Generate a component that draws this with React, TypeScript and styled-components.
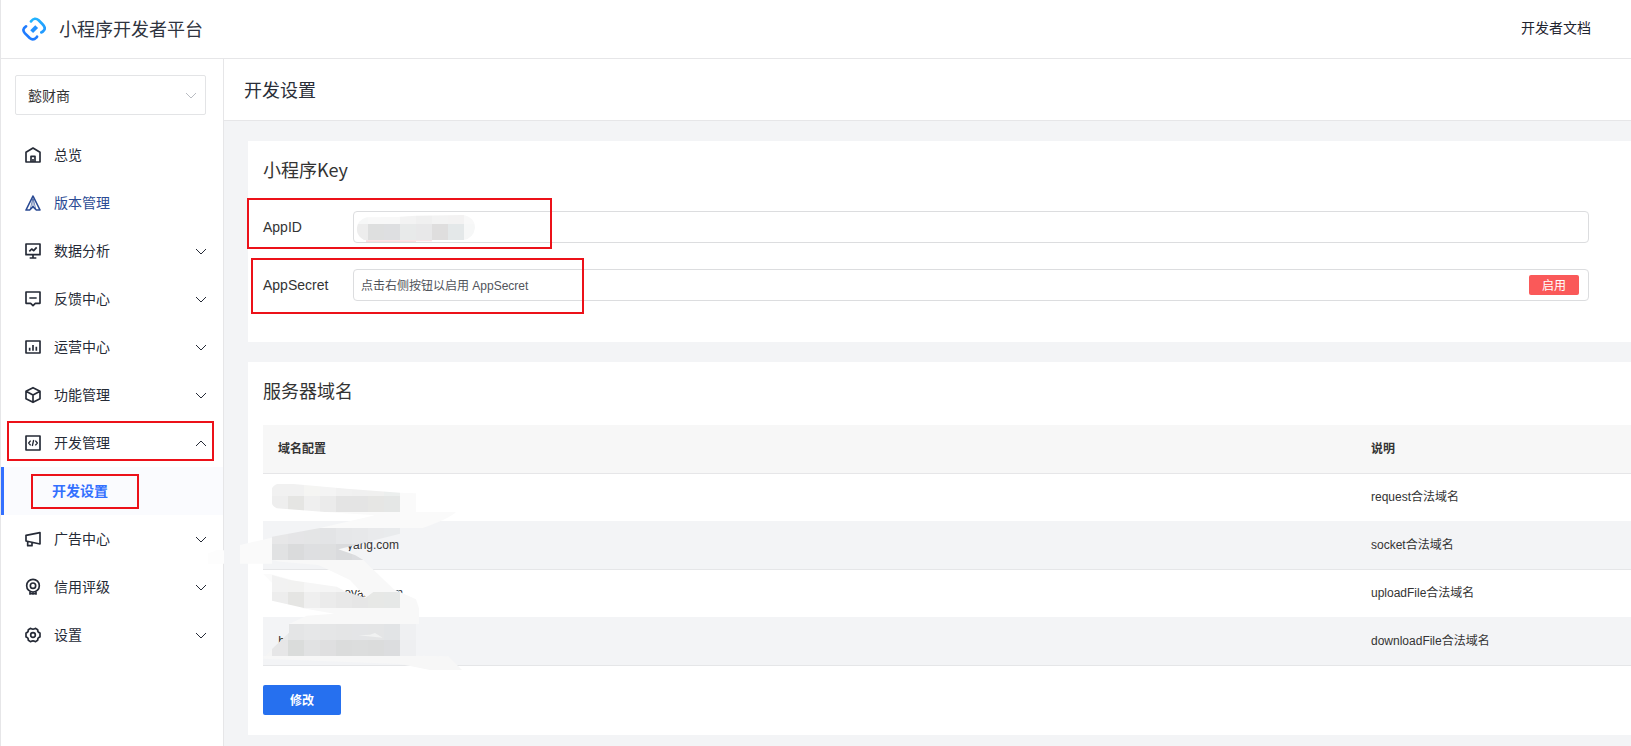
import React from "react";
import styled, { createGlobalStyle, css } from "styled-components";

const latin = `"Liberation Sans", "Noto Sans CJK SC", sans-serif`;
const cjk = `"Noto Sans CJK SC", sans-serif`;

const GlobalStyle = createGlobalStyle`
  *, *::before, *::after { box-sizing: border-box; }
  body {
    margin: 0;
    background: #f3f4f6;
    color: #333;
    font: 14px/20px ${latin};
  }
  button, input, select { font: inherit; color: inherit; }
`;

const Page = styled.div`
  min-height: 100vh;
  display: flex;
  flex-direction: column;
  border-left: 1px solid #e6e6e8;
  overflow-x: hidden;
`;

const Header = styled.header`
  height: 59px;
  flex: none;
  display: flex;
  align-items: center;
  justify-content: space-between;
  padding: 0 40px 0 21px;
  background: #fff;
  border-bottom: 1px solid #e6e6e8;
`;

const Brand = styled.div`
  display: flex;
  align-items: center;
  gap: 13px;
`;

const BrandName = styled.span`
  padding-bottom: 2px;
  font: 18px/28px ${cjk};
  color: #2f3440;
`;

const DocLink = styled.a`
  padding-bottom: 2px;
  color: #1f2430;
  text-decoration: none;
`;

const Body = styled.div`
  flex: 1;
  display: flex;
`;

const Sidebar = styled.aside`
  width: 223px;
  flex: none;
  padding-top: 16px;
  background: #fff;
  border-right: 1px solid #e6e6e8;
`;

const SelectBox = styled.div`
  position: relative;
  margin: 0 17px 16px 14px;
`;

const AppSelect = styled.select`
  display: block;
  width: 100%;
  height: 40px;
  padding: 2px 32px 0 12px;
  appearance: none;
  border: 1px solid #e3e4e6;
  border-radius: 2px;
  background: #fff;
`;

const SelectArrow = styled.span`
  position: absolute;
  right: 9px;
  top: 14px;
  display: flex;
  color: #b9bcc2;
  pointer-events: none;
`;

const NavList = styled.ul`
  margin: 0;
  padding: 0;
  list-style: none;
`;

const NavItem = styled.li`
  position: relative;
`;

const navRow = css`
  width: 100%;
  height: 48px;
  display: flex;
  align-items: center;
  padding: 0 16px 0 24px;
  border: 0;
  background: none;
  text-align: left;
  text-decoration: none;
`;

const NavButton = styled.button`
  ${navRow}
  color: #252a36;
`;

const NavLink = styled.a<{ $accent?: boolean }>`
  ${navRow}
  color: ${(p) => (p.$accent ? "#2b4b94" : "#252a36")};
`;

const SubLink = styled.a`
  ${navRow}
  padding-left: 48px;
  border-left: 3px solid #3370ff;
  background: #fafbfe;
  color: #3370ff;
  font-weight: 700;
`;

const NavLabel = styled.span`
  flex: 1;
  padding-left: 13px;
`;

const Highlight = styled.span<{ $x: number; $y: number; $w: number; $h: number }>`
  position: absolute;
  left: ${(p) => p.$x}px;
  top: ${(p) => p.$y}px;
  width: ${(p) => p.$w}px;
  height: ${(p) => p.$h}px;
  border: 2px solid #ec1119;
  pointer-events: none;
`;

const Main = styled.main`
  flex: 1;
  min-width: 0;
`;

const PageTitle = styled.h1`
  height: 62px;
  margin: 0;
  padding: 16px 20px;
  background: #fff;
  border-bottom: 1px solid #e6e6e8;
  font: 18px/28px ${cjk};
  color: #2a2e38;
`;

const Cards = styled.div`
  display: flex;
  flex-direction: column;
  gap: 20px;
  padding: 20px 0 11px 24px;
`;

const Card = styled.section`
  padding: 14px 0 20px 15px;
  background: #fff;
`;

const CardTitle = styled.h2`
  margin: 0 0 21px;
  font: 18px/28px ${cjk};
  color: #333;
`;

const Fields = styled.div`
  display: flex;
  flex-direction: column;
  gap: 26px;
  padding: 7px 42px 21px 0;
`;

const Field = styled.div`
  position: relative;
  display: flex;
  align-items: center;
`;

const FieldLabel = styled.label`
  width: 90px;
  flex: none;
`;

const InputFrame = styled.div`
  flex: 1;
  height: 32px;
  display: flex;
  align-items: center;
  padding: 0 9px 0 7px;
  border: 1px solid #dcdddf;
  border-radius: 4px;
`;

const FieldInput = styled.input`
  flex: 1;
  min-width: 0;
  height: 30px;
  padding: 0 0 2px;
  border: 0;
  outline: 0;
  background: none;
  font-size: 12px;
  color: #51545b;
`;

const EnableButton = styled.button`
  width: 50px;
  height: 20px;
  padding: 2px 0 0;
  border: 0;
  border-radius: 2px;
  background: #fa5959;
  color: #fff;
  font-size: 12px;
  line-height: 18px;
`;

const TableWrap = styled.div`
  position: relative;
`;

const Table = styled.table`
  width: 100%;
  table-layout: fixed;
  border-collapse: separate;
  border-spacing: 0;
  font-size: 12px;
`;

const Th = styled.th<{ $w?: number }>`
  width: ${(p) => (p.$w ? `${p.$w}px` : "auto")};
  height: 49px;
  padding: 0 15px;
  background: #f7f7f7;
  border-bottom: 1px solid #e6e6e8;
  text-align: left;
`;

const Td = styled.td<{ $shaded: boolean }>`
  height: 48px;
  padding: 0 15px 2px;
  background: ${(p) => (p.$shaded ? "#f3f4f6" : "#fff")};
  border-bottom: 1px solid ${(p) => (p.$shaded ? "#e5e6e8" : "#f3f4f6")};
`;

const Domain = styled.span<{ $w: number }>`
  display: block;
  width: ${(p) => p.$w}px;
  text-align: right;
`;

const Cover = styled.svg<{ $x: number; $y: number }>`
  position: absolute;
  left: ${(p) => p.$x}px;
  top: ${(p) => p.$y}px;
  pointer-events: none;
`;

const ModifyButton = styled.button`
  display: block;
  width: 78px;
  height: 30px;
  margin-top: 19px;
  padding: 2px 0 0;
  border: 0;
  border-radius: 2px;
  background: #2670ef;
  color: #fff;
  font-size: 12px;
  font-weight: 700;
`;

const Logo = () => (
  <svg width="24" height="24" viewBox="0 0 72 72" fill="none" strokeWidth="8" strokeLinecap="round" aria-hidden="true">
    <defs>
      <linearGradient id="logoTop" x1="24" y1="4" x2="64" y2="50" gradientUnits="userSpaceOnUse">
        <stop stopColor="#22b8ff" />
        <stop offset="1" stopColor="#2298ff" />
      </linearGradient>
    </defs>
    <path d="M27 13Q38 -1 50 10L61 21Q73 33 65 41Q62 45 58 46" stroke="url(#logoTop)" />
    <path d="M12 28Q-2 37 9 49L23 63Q33 72 43 62L45 59" stroke="#1f7cff" />
    <path d="M29 44L44 29" stroke="#2191ff" strokeWidth="12" strokeLinecap="butt" />
  </svg>
);

const Chevron = ({ up }: { up?: boolean }) => (
  <svg width="12" height="12" viewBox="0 0 12 12" fill="none" stroke="currentColor" aria-hidden="true">
    <path d={up ? "M1 9L6 4L11 9" : "M1 4L6 9L11 4"} />
  </svg>
);

const icons: Record<string, React.ReactNode> = {
  home: (
    <>
      <path d="M3 45V16L24 3L45 16V45Z" />
      <path d="M18 45V28H30V45M24 36V45" />
    </>
  ),
  version: (
    <>
      <path d="M24 3L3 45H14L24 35L34 45H45Z" />
      <path d="M24 6V35M23 12L16 42M25 12L32 42" strokeWidth="2" />
    </>
  ),
  data: (
    <>
      <path d="M3 3H45V35H3Z" />
      <path d="M24 35V45M14 45H34M13 25L20 18L26 23L35 13" />
    </>
  ),
  feedback: <path d="M3 3H45V37H31L24 44L17 37H3ZM13 21H35" />,
  operate: (
    <>
      <path d="M3 6H45V42H3Z" />
      <path d="M14 26V35M24 18V35M34 23V35" />
    </>
  ),
  cube: <path d="M24 2L45 13V35L24 46L3 35V13ZM3 13L24 24L45 13M24 24V46" />,
  code: (
    <>
      <path d="M3 3H45V45H3Z" />
      <path d="M17 17L11 24L17 31M31 17L37 24L31 31M26 15L22 33" strokeWidth="4" />
    </>
  ),
  horn: <path d="M3 13L45 5V39L3 30ZM8 31V44H21V34" />,
  medal: (
    <>
      <circle cx="24" cy="20" r="19" />
      <circle cx="24" cy="20" r="8" />
      <path d="M15 38V47M33 38V47M15 44H33M24 40V47" />
    </>
  ),
  gear: (
    <>
      <path d="M17 4Q24 9 31 4L38 8Q37 16 45 18V30Q37 32 38 40L31 44Q24 39 17 44L10 40Q11 32 3 30V18Q11 16 10 8Z" />
      <circle cx="24" cy="24" r="7" />
    </>
  ),
};

const Icon = ({ name }: { name: string }) => (
  <svg width="16" height="16" viewBox="0 0 48 48" fill="none" stroke="currentColor" strokeWidth="5" strokeLinejoin="round" overflow="visible" aria-hidden="true">
    {icons[name]}
  </svg>
);

/* A row of equally wide mosaic tiles. */
const Tiles = ({ x, y, h, colors }: { x: number; y: number; h: number; colors: string[] }) => (
  <g shapeRendering="crispEdges">
    {colors.map((c, i) => (
      <rect key={i} x={x + i * 48} y={y} width="48" height={h} fill={c} />
    ))}
  </g>
);

const KeyCover = () => (
  <Cover $x={92} $y={2} width="122" height="30" viewBox="375 459 366 90" aria-hidden="true">
    <clipPath id="keyClip">
      <path d="M380 508Q382 480 410 472L500 471L558 467L700 465Q735 472 735 504Q730 536 700 540H402Q382 530 380 508Z" />
    </clipPath>
    <g clipPath="url(#keyClip)">
      <Tiles x={366} y={459} h={33} colors={["#f6f7f7", "#f8f8f8", "#f8f8f8", "#f3f3f3", "#f0f0f0", "#f3f3f3", "#f3f2f2", "#f8f8f8"]} />
      <Tiles x={366} y={492} h={48} colors={["#ededed", "#dedfdf", "#dedfe1", "#e8eaea", "#e8e8e9", "#dfdede", "#e4e8e9", "#f6f7f7"]} />
    </g>
    <path d="M408 541H606V544H558V546H408Z" fill="#f9dcdf" />
  </Cover>
);

const DomainCover = () => (
  <Cover $x={-63} $y={45} width="290" height="210" viewBox="0 0 870 630" aria-hidden="true">
    <clipPath id="row1">
      <path d="M216 55Q222 41 240 41L280 42L440 56L600 68L648 70V126H375L230 115Q216 108 216 100Z" />
    </clipPath>
    <clipPath id="row2">
      <path d="M216 200L360 174H600V191L415 238L465 255L490 270H216Z" />
    </clipPath>
    <clipPath id="row3">
      <path d="M216 315L270 330L410 350L440 366L497 383L520 366H600V414H312L216 392Z" />
    </clipPath>
    <clipPath id="row4">
      <path d="M267 462H648V558H195L216 537L267 488Z" />
    </clipPath>
    <path d="M24 250L50 241H72V281H24Z" fill="#fdfdfd" />
    <path d="M375 126H768Q750 145 668 174H360L216 205V281H120V225L216 203L360 174L525 136Z" fill="#fafafa" />
    <path d="M216 270H490L415 238L435 235L490 270L580 357L648 388L657 415V462H267L320 437L403 431L300 413L480 410L600 366L500 384L450 330L355 285L240 275Z" fill="#f8f8f8" />
    <path d="M190 312H212L270 328L300 340L240 350L216 338Z" fill="#fbfbfb" />
    <path d="M190 558L480 555L745 559L786 600H690L600 582L190 566Z" fill="#f7f7f7" />
    <g clipPath="url(#row1)">
      <Tiles x={216} y={40} h={38} colors={["#f1f1f1", "#f1f1f1", "#f5f5f3", "#f4f4f4", "#f1f1f1", "#f0f0f0", "#f0f0ef", "#ecefee", "#fafafa"]} />
      <Tiles x={216} y={78} h={48} colors={["#eeeeee", "#e5e5e3", "#efefef", "#ebebeb", "#e4e4e4", "#e4e4e4", "#e6e6e4", "#e5e7e6", "#fafafa"]} />
    </g>
    <g clipPath="url(#row2)">
      <Tiles x={216} y={174} h={48} colors={["#e7e7e8", "#e5e5e7", "#e4e5e6", "#e3e4e6", "#e6e7e9", "#e7e8ea", "#e9eaec", "#e9ebed"]} />
      <Tiles x={216} y={222} h={48} colors={["#e1e2e3", "#dadbdc", "#dedfe1", "#dedfe0", "#dadbdd", "#dcdde0", "#e3e4e6", "#e6e7e9"]} />
    </g>
    <g clipPath="url(#row3)">
      <Tiles x={216} y={315} h={51} colors={["#f2f2f2", "#f2f2f1", "#f6f6f6", "#f5f5f5", "#f4f4f4", "#f4f4f4", "#f7f7f7", "#f7f7f7"]} />
      <Tiles x={216} y={366} h={48} colors={["#ededed", "#e5e5e3", "#efefef", "#ebebeb", "#e8e8e8", "#e6e6e6", "#e7e8e6", "#e6e8e7"]} />
    </g>
    <g clipPath="url(#row4)">
      <Tiles x={168} y={462} h={48} colors={["#f5f5f5", "#e9eaeb", "#e4e5e6", "#e6e7e8", "#e5e6e7", "#e4e5e6", "#e4e5e7", "#e4e5e6", "#e2e4e6", "#eff0f2"]} />
      <Tiles x={168} y={510} h={48} colors={["#f5f5f5", "#e6e6e7", "#dadcdb", "#e1e2e3", "#dfdfe0", "#dbdcdc", "#dcdddd", "#dbdcdc", "#dcdddf", "#eeeff1"]} />
      <path d="M475 496L510 494L525 489L548 503Z" fill="#f1f2f2" />
    </g>
  </Cover>
);

type Entry = { label: string; icon: string; kind?: "link" | "accent" | "open" };

const entries: Entry[] = [
  { label: "总览", icon: "home", kind: "link" },
  { label: "版本管理", icon: "version", kind: "accent" },
  { label: "数据分析", icon: "data" },
  { label: "反馈中心", icon: "feedback" },
  { label: "运营中心", icon: "operate" },
  { label: "功能管理", icon: "cube" },
  { label: "开发管理", icon: "code", kind: "open" },
  { label: "广告中心", icon: "horn" },
  { label: "信用评级", icon: "medal" },
  { label: "设置", icon: "gear" },
];

const NavEntry = ({ label, icon, kind }: Entry) => {
  if (kind === "link" || kind === "accent") {
    return (
      <NavItem>
        <NavLink href="#" $accent={kind === "accent"}>
          <Icon name={icon} />
          <NavLabel>{label}</NavLabel>
        </NavLink>
      </NavItem>
    );
  }
  const open = kind === "open";
  return (
    <NavItem>
      <NavButton type="button" aria-expanded={open}>
        <Icon name={icon} />
        <NavLabel>{label}</NavLabel>
        <Chevron up={open} />
      </NavButton>
      {open && (
        <>
          <Highlight $x={6} $y={2} $w={207} $h={40} />
          <NavList>
            <NavItem>
              <SubLink href="#" aria-current="page">开发设置</SubLink>
              <Highlight $x={30} $y={7} $w={108} $h={35} />
            </NavItem>
          </NavList>
        </>
      )}
    </NavItem>
  );
};

const rows = [
  { domain: "", width: 121, note: "request合法域名" },
  { domain: "yang.com", width: 121, note: "socket合法域名" },
  { domain: "oyang.com", width: 125, note: "uploadFile合法域名" },
  { domain: "h", width: 7, note: "downloadFile合法域名" },
];

export default function App() {
  return (
    <Page>
      <GlobalStyle />
      <Header>
        <Brand>
          <Logo />
          <BrandName>小程序开发者平台</BrandName>
        </Brand>
        <DocLink href="#">开发者文档</DocLink>
      </Header>
      <Body>
        <Sidebar>
          <SelectBox>
            <AppSelect aria-label="小程序">
              <option>懿财商</option>
            </AppSelect>
            <SelectArrow>
              <Chevron />
            </SelectArrow>
          </SelectBox>
          <nav>
            <NavList>
              {entries.map((e) => (
                <NavEntry key={e.label} {...e} />
              ))}
            </NavList>
          </nav>
        </Sidebar>
        <Main>
          <PageTitle>开发设置</PageTitle>
          <Cards>
            <Card>
              <CardTitle>小程序Key</CardTitle>
              <Fields>
                <Field>
                  <FieldLabel htmlFor="app-id">AppID</FieldLabel>
                  <InputFrame>
                    <FieldInput id="app-id" readOnly />
                  </InputFrame>
                  <KeyCover />
                  <Highlight $x={-16} $y={-13} $w={305} $h={51} />
                </Field>
                <Field>
                  <FieldLabel htmlFor="app-secret">AppSecret</FieldLabel>
                  <InputFrame>
                    <FieldInput id="app-secret" readOnly value="点击右侧按钮以启用 AppSecret" />
                    <EnableButton type="button">启用</EnableButton>
                  </InputFrame>
                  <Highlight $x={-12} $y={-11} $w={333} $h={56} />
                </Field>
              </Fields>
            </Card>
            <Card>
              <CardTitle>服务器域名</CardTitle>
              <TableWrap>
                <Table>
                  <thead>
                    <tr>
                      <Th scope="col">域名配置</Th>
                      <Th scope="col" $w={275}>说明</Th>
                    </tr>
                  </thead>
                  <tbody>
                    {rows.map((r, i) => (
                      <tr key={r.note}>
                        <Td $shaded={i % 2 === 1}>
                          <Domain $w={r.width}>{r.domain}</Domain>
                        </Td>
                        <Td $shaded={i % 2 === 1}>{r.note}</Td>
                      </tr>
                    ))}
                  </tbody>
                </Table>
                <DomainCover />
              </TableWrap>
              <ModifyButton type="button">修改</ModifyButton>
            </Card>
          </Cards>
        </Main>
      </Body>
    </Page>
  );
}
